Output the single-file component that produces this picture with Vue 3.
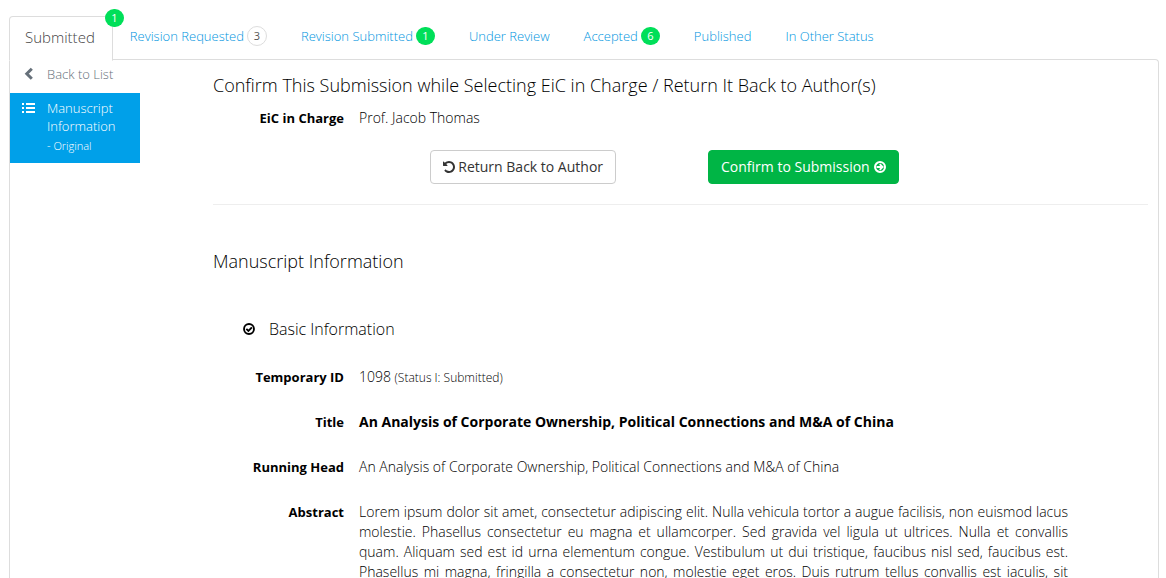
<script setup>
const tabs = [
  { label: 'Revision Requested', count: 3, muted: true },
  { label: 'Revision Submitted', count: 1 },
  { label: 'Under Review' },
  { label: 'Accepted', count: 6 },
  { label: 'Published' },
  { label: 'In Other Status' },
]
const title = 'An Analysis of Corporate Ownership, Political Connections and M&A of China'
const abstract =
  'Lorem ipsum dolor sit amet, consectetur adipiscing elit. Nulla vehicula tortor a augue facilisis, non euismod lacus molestie. Phasellus consectetur eu magna et ullamcorper. Sed gravida vel ligula ut ultrices. Nulla et convallis quam. Aliquam sed est id urna elementum congue. Vestibulum ut dui tristique, faucibus nisl sed, faucibus est. Phasellus mi magna, fringilla a consectetur non, molestie eget eros. Duis rutrum tellus convallis est iaculis, sit'
</script>

<template>
  <div class="page">
    <nav class="tabs">
      <a href="#" class="tab active" aria-current="page">Submitted<span class="badge corner">1</span></a>
      <a v-for="tab in tabs" :key="tab.label" href="#" class="tab">
        {{ tab.label }}<span v-if="tab.count" class="badge" :class="{ muted: tab.muted }">{{ tab.count }}</span>
      </a>
    </nav>

    <div class="panel">
      <aside class="side">
        <a href="#" class="side-link">
          <svg class="side-icon" viewBox="0 0 14 14" aria-hidden="true">
            <path d="M9.800 1.800 4.800 6.800l5 5" fill="none" stroke="currentColor" stroke-width="3" />
          </svg>
          <span>Back to List</span>
        </a>
        <a href="#" class="side-link selected">
          <svg class="side-icon" viewBox="0 0 14 14" aria-hidden="true">
            <path d="M0 2h2v2H0zM4 2h9v2H4zM0 6h2v2H0zM4 6h9v2H4zM0 10h2v2H0zM4 10h9v2H4z" fill="currentColor" />
          </svg>
          <span>Manuscript Information<small>- Original</small></span>
        </a>
      </aside>

      <main class="content">
        <h2>Confirm This Submission while Selecting EiC in Charge / Return It Back to Author(s)</h2>
        <dl class="row charge">
          <dt>EiC in Charge</dt>
          <dd>Prof. Jacob Thomas</dd>
        </dl>
        <div class="actions">
          <button type="button" class="btn">
            <svg viewBox="0 0 1536 1536" aria-hidden="true">
              <path fill="currentColor" d="M1536 768q0 156-61 298t-164 245-245 164-298 61q-172 0-327-72.500T177 1259q-7-10-6.500-22.500T179 1216l137-138q10-9 25-9 16 2 23 12 73 95 179 147t225 52q104 0 198.500-40.500T1130 1130t109.500-163.500T1280 768t-40.500-198.500T1130 406 966.500 296.500 768 256q-98 0-188 35.500T420 393l137 138q31 30 14 69-17 40-59 40H64q-26 0-45-19T0 576V128q0-42 40-59 39-17 69 14l130 129Q346 111 483.500 55.500T768 0q156 0 298 61t245 164 164 245 61 298z" />
            </svg>
            Return Back to Author
          </button>
          <button type="button" class="btn primary">
            Confirm to Submission
            <svg viewBox="0 0 14 14" aria-hidden="true">
              <circle cx="7" cy="7" r="5.800" fill="none" stroke="currentColor" stroke-width="2.400" />
              <path d="M3 7h6.500M6.700 3.700 10 7l-3.300 3.300" fill="none" stroke="currentColor" stroke-width="2.200" />
            </svg>
          </button>
        </div>
        <hr />

        <h2 class="section">Manuscript Information</h2>
        <h3>
          <svg viewBox="0 0 14 14" aria-hidden="true">
            <circle cx="7" cy="7" r="5.800" fill="none" stroke="currentColor" stroke-width="2.200" />
            <path d="m3.900 6.800 2.400 2.400 4.100-4.100" fill="none" stroke="currentColor" stroke-width="2.200" />
          </svg>
          Basic Information
        </h3>
        <dl class="details">
          <div class="row">
            <dt>Temporary ID</dt>
            <dd>1098 <small>(Status I: Submitted)</small></dd>
          </div>
          <div class="row">
            <dt>Title</dt>
            <dd><strong>{{ title }}</strong></dd>
          </div>
          <div class="row">
            <dt>Running Head</dt>
            <dd>{{ title }}</dd>
          </div>
          <div class="row">
            <dt>Abstract</dt>
            <dd class="abstract">{{ abstract }}</dd>
          </div>
        </dl>
      </main>
    </div>
  </div>
</template>

<style>
body {
  background: #fff;
}
</style>

<style scoped>
.page {
  box-sizing: border-box;
  display: flex;
  flex-direction: column;
  min-height: 100vh;
  padding: 16px 7px 0 9px;
  color: #000;
  font: 300 14px/20px "Open Sans", "Noto Sans", sans-serif;
}
a {
  text-decoration: none;
}
.tabs {
  display: flex;
  flex: none;
  height: 43px;
}
.tab {
  padding: 10px 17px;
  color: #0095e0;
  font-size: 13px;
  white-space: nowrap;
}
.tab.active {
  position: relative;
  z-index: 1;
  height: 22px;
  padding: 10px 17px 11px 15px;
  border: 1px solid #ddd;
  border-bottom-color: #fff;
  border-radius: 4px 4px 0 0;
  background: #fff;
  color: #444;
  font-size: 15px;
}
.badge {
  display: inline-block;
  box-sizing: border-box;
  width: 19px;
  height: 18px;
  margin-left: 3px;
  border-radius: 9px;
  background: #00df59;
  color: #fff;
  font-size: 11px;
  font-weight: 400;
  line-height: 17px;
  text-align: center;
}
.badge.muted {
  width: 20px;
  height: 20px;
  border: 1px solid #ddd;
  border-radius: 10px;
  background: #fff;
  color: #555;
}
.tab:not(.active) .badge {
  vertical-align: 1px;
  margin-bottom: -2px;
}
.badge.corner {
  position: absolute;
  top: -8px;
  right: -12px;
}
.panel {
  display: flex;
  flex: 1;
  border: 1px solid #ddd;
  border-bottom: 0;
  border-radius: 0 4px 0 0;
}
.side {
  flex: none;
  width: 130px;
  margin-right: 73px;
}
.side-link {
  display: flex;
  gap: 11px;
  padding: 5px 12px 10px;
  color: #66707a;
  font-size: 13px;
  line-height: 18px;
}
.side-link.selected {
  padding: 6px 12px 8px;
  background: #00a0e9;
  color: #fff;
}
.side-icon {
  flex: none;
  width: 14px;
  height: 14px;
  margin-top: 2px;
}
.side-link small {
  display: block;
  margin-top: 2px;
  font-size: 11px;
  line-height: 18px;
}
.content {
  flex: 1;
  min-width: 0;
  padding: 13px 10px 0 0;
}
h2 {
  margin: 0;
  font-size: 18px;
  font-weight: 300;
  line-height: 24px;
}
dl,
dd {
  margin: 0;
}
.row {
  display: flex;
  gap: 15px;
  padding-right: 80px;
}
.charge {
  margin-top: 11px;
}
dt {
  flex: none;
  width: 131px;
  font-size: 13px;
  font-weight: 700;
  text-align: right;
}
dd {
  flex: 1;
}
small {
  font-size: 12px;
  line-height: 12px;
}
strong {
  font-weight: 700;
}
.actions {
  display: flex;
  justify-content: center;
  gap: 92px;
  margin-top: 22px;
  padding-right: 32px;
}
.btn {
  display: flex;
  align-items: center;
  gap: 3px;
  padding: 6px 12px;
  border: 1px solid #ccc;
  border-radius: 4px;
  background: #fff;
  color: #333;
  font: 400 14px/20px "Open Sans", "Noto Sans", sans-serif;
}
.btn svg {
  width: 12px;
  height: 12px;
}
.btn.primary {
  gap: 4px;
  border-color: #00b545;
  background: #00b545;
  color: #fff;
}
hr {
  margin: 20px 0 0;
  border: 0;
  border-top: 1px solid #eee;
}
.section {
  margin-top: 44px;
}
h3 {
  display: flex;
  align-items: center;
  gap: 14px;
  margin: 44px 0 0 30px;
  font-size: 16px;
  font-weight: 300;
  line-height: 24px;
}
h3 svg {
  width: 12px;
  height: 12px;
}
.details {
  display: flex;
  flex-direction: column;
  gap: 25px;
  margin-top: 26px;
}
.abstract {
  text-align: justify;
  text-align-last: justify;
}
</style>
